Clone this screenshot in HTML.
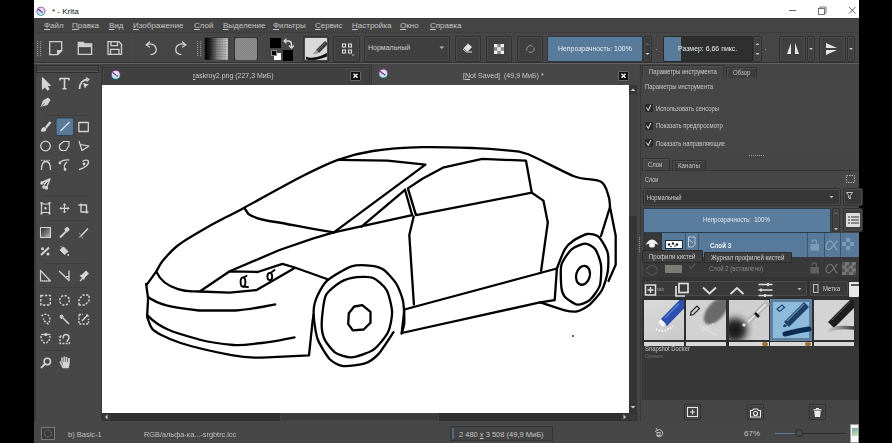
<!DOCTYPE html>
<html><head><meta charset="utf-8">
<style>
*{margin:0;padding:0;box-sizing:border-box}
html,body{width:892px;height:443px;overflow:hidden;background:#000;font-family:"Liberation Sans",sans-serif}
.a{position:absolute}
svg{position:absolute;overflow:visible}
.a{transform-origin:0 50%}
#app{position:absolute;left:34px;top:0;width:825px;height:443px;background:#464646;overflow:hidden}
#menu span{position:absolute;top:21px;white-space:nowrap;font-size:8px;color:#c4c4c4}
#menu u{text-decoration:underline}
.btn{position:absolute;background:#404040;border:1px solid #313131;border-radius:2px;box-shadow:inset 0 0 0 1px #4b4b4b}
.grip{position:absolute;width:4px;background-image:radial-gradient(circle,#8a8a8a 0.6px,transparent 0.9px);background-size:2px 2px}
</style></head><body>
<div id="app"></div>
<svg width="0" height="0" style="position:absolute"><defs>
<radialGradient id="kin" cx="0.6" cy="0.35" r="0.7"><stop offset="0" stop-color="#f6e4f2"/><stop offset="0.45" stop-color="#e3cde6"/><stop offset="0.7" stop-color="#c8e6ee"/><stop offset="1" stop-color="#b9e0ea"/></radialGradient>
<linearGradient id="kring" x1="0.3" y1="0" x2="0.5" y2="1"><stop offset="0" stop-color="#8a2c8c"/><stop offset="0.5" stop-color="#5a4a9a"/><stop offset="1" stop-color="#138a8a"/></linearGradient>
<g id="kicon"><circle r="4.9" fill="url(#kring)" opacity="0.9"/><circle r="4" fill="url(#kin)"/><path d="M-3.4 -2.4L0.6 0.6" stroke="#5a2f85" stroke-width="1.1"/><circle cx="1.3" cy="1.2" r="0.7" fill="#333"/></g>
</defs></svg>

<!-- title bar -->
<div class="a" style="left:34px;top:0;width:825px;height:18px;background:#fff"></div>
<svg style="left:0;top:0" width="60" height="20"><use href="#kicon" transform="translate(41 11.2) scale(0.92)"/></svg>
<div class="a" style="left:52px;top:7px;font-size:8px;color:#111">* - Krita</div>
<svg style="left:0;top:0" width="892" height="18">
  <line x1="789" y1="10.5" x2="796" y2="10.5" stroke="#555" stroke-width="0.9"/>
  <rect x="818.5" y="8.5" width="6" height="6" fill="none" stroke="#555" stroke-width="0.8"/>
  <path d="M820 8.5V7h6v6h-1.5" fill="none" stroke="#555" stroke-width="0.8"/>
  <path d="M849 7l6.5 6.5M855.5 7L849 13.5" stroke="#555" stroke-width="0.9"/>
</svg>
<!-- menu -->
<div class="a" style="left:34px;top:18px;width:825px;height:15px;background:#444444;border-top:1px solid #3a3a3a"></div>
<div id="menu">
  <span style="left:44px"><u>Ф</u>айл</span>
  <span style="left:72px"><u>П</u>равка</span>
  <span style="left:109px"><u>В</u>ид</span>
  <span style="left:133px"><u>И</u>зображение</span>
  <span style="left:194px"><u>С</u>лой</span>
  <span style="left:223px"><u>В</u>ыделение</span>
  <span style="left:273px"><u>Ф</u>ильтры</span>
  <span style="left:315px"><u>С</u>ервис</span>
  <span style="left:352px"><u>Н</u>астройка</span>
  <span style="left:400px"><u>О</u>кно</span>
  <span style="left:430px"><u>С</u>правка</span>
</div>
<!-- toolbar -->
<div class="a" style="left:34px;top:32px;width:825px;height:33px;background:#464646;border-top:1px solid #3d3d3d;border-bottom:1px solid #3c3c3c"></div><div class="a" style="left:34px;top:62px;width:825px;height:1px;background:#343434"></div><div class="a" style="left:34px;top:63px;width:825px;height:1px;background:#626262"></div>
<svg style="left:0;top:0" width="892" height="70" fill="#8c8c8c"><rect x="37" y="41" width="1.2" height="1.2"/><rect x="40" y="41" width="1.2" height="1.2"/><rect x="37" y="43" width="1.2" height="1.2"/><rect x="40" y="43" width="1.2" height="1.2"/><rect x="37" y="45" width="1.2" height="1.2"/><rect x="40" y="45" width="1.2" height="1.2"/><rect x="37" y="47" width="1.2" height="1.2"/><rect x="40" y="47" width="1.2" height="1.2"/><rect x="37" y="49" width="1.2" height="1.2"/><rect x="40" y="49" width="1.2" height="1.2"/><rect x="37" y="51" width="1.2" height="1.2"/><rect x="40" y="51" width="1.2" height="1.2"/><rect x="37" y="53" width="1.2" height="1.2"/><rect x="40" y="53" width="1.2" height="1.2"/><rect x="37" y="55" width="1.2" height="1.2"/><rect x="40" y="55" width="1.2" height="1.2"/></svg>
<svg style="left:0;top:0" width="892" height="70" fill="none" stroke="#cfcfcf" stroke-width="1.3">
  <!-- new -->
  <path d="M49.7 41.7h12v9l-4 4h-8z"/><path d="M61.7 50.7h-4v4" fill="#cfcfcf"/>
  <!-- open -->
  <path d="M78.3 54.3v-12h5l1 1.5h7.3v10.5z"/><path d="M78.3 46.5h13.3" /><path d="M78.3 42.3h5l1 1.5h7.3v2.7h-13.3z" fill="#cfcfcf" stroke="none"/>
  <!-- save -->
  <path d="M108 41.7h11l2.5 2.5v10.2h-13.5z"/><path d="M111 41.7v4h6.5v-4"/><path d="M110.5 54.4v-5h8.5v5"/>
  <!-- undo -->
  <path d="M147 45c2.5-1.8 8.5-1.5 9.2 4 .5 4-2.5 5.6-5.5 5.6"/><path d="M150 41.6L146.2 45l3.8 2.2"/>
  <!-- redo -->
  <path d="M185 45c-2.5-1.8-8.5-1.5-9.2 4-.5 4 2.5 5.6 5.5 5.6"/><path d="M182 41.6L185.8 45 182 47.2"/>
</svg>
<div class="a" style="left:132px;top:36px;width:1px;height:25px;background:#4a4a4a"></div>
<svg style="left:0;top:0" width="892" height="70" fill="#8c8c8c"><rect x="197" y="41" width="1.2" height="1.2"/><rect x="200" y="41" width="1.2" height="1.2"/><rect x="197" y="43" width="1.2" height="1.2"/><rect x="200" y="43" width="1.2" height="1.2"/><rect x="197" y="45" width="1.2" height="1.2"/><rect x="200" y="45" width="1.2" height="1.2"/><rect x="197" y="47" width="1.2" height="1.2"/><rect x="200" y="47" width="1.2" height="1.2"/><rect x="197" y="49" width="1.2" height="1.2"/><rect x="200" y="49" width="1.2" height="1.2"/><rect x="197" y="51" width="1.2" height="1.2"/><rect x="200" y="51" width="1.2" height="1.2"/><rect x="197" y="53" width="1.2" height="1.2"/><rect x="200" y="53" width="1.2" height="1.2"/><rect x="197" y="55" width="1.2" height="1.2"/><rect x="200" y="55" width="1.2" height="1.2"/></svg>
<!-- gradient -->
<div class="a" style="left:203px;top:36px;width:26px;height:25px;background:#333;border:1px solid #4a4a4a;border-radius:2px"></div>
<div class="a" style="left:205px;top:37.5px;width:22.5px;height:22.5px;background:repeating-conic-gradient(#d8d8d8 0 25%,#a8a8a8 0 50%) 0 0/2.5px 2.5px;border-radius:1px;overflow:hidden"><div class="a" style="left:0;top:0;width:100%;height:100%;background:linear-gradient(90deg,#000 0,rgba(0,0,0,.85) 20%,rgba(0,0,0,.35) 55%,rgba(0,0,0,0) 100%)"></div></div>
<!-- pattern -->
<div class="a" style="left:232.5px;top:36px;width:26.5px;height:25px;background:#333;border:1px solid #4a4a4a;border-radius:2px"></div>
<div class="a" style="left:235px;top:37.5px;width:22px;height:22.5px;background:repeating-conic-gradient(#8e8e8e 0 25%,#858585 0 50%) 0 0/2px 2px;border-radius:2px"></div>
<!-- colors -->
<div class="a" style="left:264px;top:35px;width:35px;height:27px;border:1px solid #474747;border-radius:2px"></div>
<div class="a" style="left:270px;top:37.5px;width:11px;height:10.5px;background:#000"></div>
<div class="a" style="left:282.5px;top:50px;width:10.5px;height:10.5px;background:#000"></div>
<div class="a" style="left:274px;top:53px;width:6.5px;height:7px;background:#fff"></div>
<div class="a" style="left:270.5px;top:49.8px;width:6px;height:6px;background:#000;border:1px solid #8a8a8a"></div>
<svg style="left:0;top:0" width="892" height="70" fill="none" stroke="#e0e0e0" stroke-width="1.3">
  <path d="M284.5 41h3.5c2.5 0 3.5 1.5 3.5 3.5v3"/><path d="M286.5 38.6L284 41l2.5 2.4M289 45.5l2.5 2.6 2.5-2.6" stroke-width="1.2"/>
</svg>
<!-- brush preset -->
<div class="btn" style="left:303px;top:36px;width:26px;height:26px"></div>
<div class="a" style="left:305px;top:38px;width:22px;height:22px;background:#d9d9d9;border-radius:1px;overflow:hidden">
  <svg style="left:0;top:0" width="22" height="22">
    <path d="M11 12l9-9 3 3-9 9z" fill="#3a3a3a"/><path d="M11 12l-3.5 4.5 6.5-1.5z" fill="#9a9a9a"/><path d="M12 13l8-8" stroke="#777" stroke-width="0.8"/>
    <path d="M1 18.5c5 2.5 13 1 22-4v3.5c-8 4-16 5-22 3.5z" fill="#111"/>
  </svg>
</div>
<!-- workspace -->
<div class="btn" style="left:333px;top:36px;width:27px;height:26px"></div>
<svg style="left:0;top:0" width="892" height="70" fill="none" stroke="#dadada" stroke-width="1.1">
  <rect x="342.5" y="44" width="3" height="3"/><rect x="348.5" y="44" width="3" height="3"/>
  <rect x="342.5" y="50" width="3" height="3"/><rect x="348.5" y="50" width="3" height="3"/>
  <path d="M352 54.5l1.2 1 1.2-1" stroke-width="0.8"/>
</svg>
<!-- blend combo -->
<div class="btn" style="left:364px;top:36px;width:86px;height:26px"></div>
<div class="a" style="left:368px;top:44px;font-size:7px;color:#cfcfcf">Нормальный</div>
<svg style="left:0;top:0" width="892" height="70"><path d="M439.5 46.5h4.5l-2.25 2.5z" fill="#bdbdbd"/></svg>
<!-- eraser -->
<div class="btn" style="left:455px;top:36px;width:26px;height:26px"></div>
<svg style="left:0;top:0" width="892" height="70">
  <path d="M468 43.5l4 3.5-4.5 4.8-4-3.5z" fill="#e0e0e0"/><path d="M463 49l3.5 3h5.5" stroke="#e0e0e0" stroke-width="1" fill="none"/>
</svg>
<!-- alpha -->
<div class="btn" style="left:486px;top:36px;width:26px;height:26px"></div>
<svg style="left:0;top:0" width="892" height="70"><g style="filter:blur(0.5px)"><rect x="494" y="44" width="10" height="10" fill="#8a8a8a"/><path d="M494 44h3.3v3.3h-3.3zM500.7 44h3.3v3.3h-3.3zM497.3 47.3h3.4v3.4h-3.4zM494 50.7h3.3v3.3h-3.3zM500.7 50.7h3.3v3.3h-3.3z" fill="#f0f0f0"/></g></svg>
<!-- reload -->
<div class="btn" style="left:517px;top:36px;width:26px;height:26px"></div>
<svg style="left:0;top:0" width="892" height="70" fill="none" stroke="#9a9a9a" stroke-width="1">
  <path d="M527 50.5a3.6 3.6 0 0 1 5.5-4.2"/><path d="M534 47.5a3.6 3.6 0 0 1-5.5 4.2"/>
</svg>
<!-- opacity slider -->
<div class="a" style="left:547px;top:36px;width:96px;height:26px;background:#587a9b;border:1px solid #2d3a46;border-radius:2px"></div>
<div class="a" style="left:558px;top:44px;font-size:7.5px;color:#e8eef3;transform:scaleX(0.92)">Непрозрачность: 100%</div>
<div class="btn" style="left:643px;top:36px;width:9px;height:26px;background:#3a3a3a"></div>
<svg style="left:0;top:0" width="892" height="70"><path d="M645.5 45l2 -2 2 2z" fill="#6a6a6a"/><path d="M645.5 53l2 2 2-2z" fill="#d0d0d0"/></svg>
<div class="a" style="left:656px;top:49px;width:1px;height:1px;background:#999"></div>
<!-- size slider -->
<div class="a" style="left:663px;top:36px;width:90px;height:26px;background:#2f2f2f;border:1px solid #2a2a2a;border-radius:2px;overflow:hidden"><div class="a" style="left:0;top:0;width:17px;height:24px;background:#587a9b"></div></div>
<div class="a" style="left:678px;top:44px;font-size:7.5px;color:#e8eef3;transform:scaleX(0.925)">Размер: 6,66 пикс.</div>
<div class="btn" style="left:753px;top:36px;width:9px;height:26px"></div>
<svg style="left:0;top:0" width="892" height="70"><path d="M755.5 45l2 -2 2 2z" fill="#c0c0c0"/><path d="M755.5 53l2 2 2-2z" fill="#d0d0d0"/></svg>
<div class="a" style="left:765px;top:49px;width:1px;height:1px;background:#999"></div>
<!-- mirror -->
<div class="btn" style="left:779px;top:36px;width:27px;height:26px"></div>
<svg style="left:0;top:0" width="892" height="70"><path d="M787 54l4-11v11z M799 54l-4-11v11z" fill="#e6e6e6"/></svg>
<div class="btn" style="left:807px;top:36px;width:8px;height:26px"></div>
<svg style="left:0;top:0" width="892" height="70"><path d="M809 48h4l-2 2z" fill="#c8c8c8"/></svg>
<div class="btn" style="left:819px;top:36px;width:27px;height:26px"></div>
<svg style="left:0;top:0" width="892" height="70"><path d="M826 43l11 5h-11z M826 55l11-5h-11z" fill="#e6e6e6"/></svg>
<div class="btn" style="left:847px;top:36px;width:8px;height:26px"></div>
<svg style="left:0;top:0" width="892" height="70"><path d="M849 48h4l-2 2z" fill="#c8c8c8"/></svg>
<!-- ===== toolbox ===== -->
<div class="a" style="left:34px;top:64px;width:68px;height:359px;background:#474747;border-left:2px solid #3a3a3a;border-right:1px solid #3a3a3a"></div>
<div class="a" style="left:36px;top:65px;width:63px;height:8px;background:#404040;border:1px solid #2e2e2e;box-shadow:inset 0 -1px 0 #555, inset 0 1px 0 #4c4c4c"></div>
<svg style="left:0;top:0" width="892" height="443" fill="none" stroke="#d4d4d4" stroke-width="1.2" stroke-linejoin="round">
  <!-- separators -->
  <g stroke="#3e3e3e" stroke-width="1">
    <path d="M42 115.5h46M42 196h46M42 220.5h46M42 263.5h46M42 287.5h46M42 350.5h28"/>
  </g>
  <!-- select arrow -->
  <path d="M42.5 78v11l2.5-2.5 2.5 3.5 1.5-1-2.3-3.5h3.5z" fill="#d4d4d4"/>
  <!-- T -->
  <path d="M60 80.5v-2h9v2M64.5 78.5v10M62.5 88.8h4" stroke-width="1.6"/>
  <!-- transform path -->
  <path d="M79.5 89c0-6 3.5-9.5 8-9.5" stroke-width="1.8"/><path d="M86 77.5l3 2-2.5 2" stroke-width="1.2"/><path d="M83 83l6 1.5-2.5 1.5-1.5 2.5z" fill="#d4d4d4" stroke="none"/>
  <!-- pen nib -->
  <path d="M40.5 107l2.5-6.5 5-3 2.5 2.5-3 5z" fill="#d4d4d4" stroke="none"/><path d="M41 106.8l3.5-3.5" stroke="#454545" stroke-width="0.8"/>
  <!-- brush -->
  <path d="M41 131.5c0-3 1.5-4.5 4-4.5l1.5 1.5c0 2.5-2 4-5.5 3z" fill="#d4d4d4" stroke="none"/><path d="M46 127.5l4.5-5.5" stroke-width="2.4"/>
  <!-- line tool selected -->
  <rect x="56" y="118" width="17.5" height="17.5" rx="2" fill="#5b7a98" stroke="#2d4254" stroke-width="1"/>
  <path d="M60.5 131l9-9" stroke="#dfe6ec" stroke-width="1.1"/>
  <!-- rect -->
  <rect x="78.8" y="122.5" width="9.5" height="9" stroke-width="1.3"/>
  <!-- circle -->
  <circle cx="45.5" cy="146" r="4.8" stroke-width="1.3"/>
  <!-- polygon -->
  <path d="M59.5 148.5v-3.5l4-3.5h5.5v4l-3 5h-4.5z" stroke-width="1.2"/>
  <!-- polyline -->
  <path d="M79 141l3 9.5 7-4.5-8.5-1.5" stroke-width="1.2"/>
  <!-- bezier -->
  <path d="M41.5 170c0-5.5 2-8.5 4.5-8.5s4.5 3 4.5 8.5" stroke-width="1.3"/><path d="M41 160.3h10" stroke-width="1" stroke-dasharray="1.5 1"/>
  <!-- freehand path -->
  <path d="M59.5 163c2-2.5 5-3.5 10-3M65 169.5c-1.5-3 0-6 2-7.5" stroke-width="1.2"/><circle cx="60" cy="163" r="0.8" fill="#d4d4d4"/><circle cx="65" cy="169.5" r="0.8" fill="#d4d4d4"/>
  <!-- spline -->
  <path d="M79 169.5c5-1 10-5 9.5-8-.5-2-4-1.5-6 0" stroke-width="1.3"/><circle cx="84" cy="164" r="0.8" fill="#d4d4d4"/>
  <!-- multibrush -->
  <path d="M41.5 182.5l8.5-3.5-3.5 8.5M44 184.5l5.5-5.5" stroke-width="1.4"/><circle cx="42" cy="183" r="1.2" fill="#d4d4d4"/><circle cx="44" cy="187" r="1.2" fill="#d4d4d4"/><circle cx="46.5" cy="188" r="1.1" fill="#d4d4d4"/>
  <!-- transform -->
  <rect x="41.5" y="204" width="8" height="8.5" stroke-width="1.2"/><path d="M40.5 203h2M48.5 203h2M40.5 213.5h2M48.5 213.5h2" stroke-width="1.8"/><circle cx="45.5" cy="208.2" r="0.6" fill="#d4d4d4"/>
  <!-- move -->
  <path d="M60 208.3h9M64.5 203.8v9" stroke-width="1.2"/><path d="M61.5 206.8l-1.5 1.5 1.5 1.5M67.5 206.8l1.5 1.5-1.5 1.5M63 205.3l1.5-1.5 1.5 1.5M63 211.3l1.5 1.5 1.5-1.5" stroke-width="1"/>
  <!-- crop -->
  <path d="M78.5 205h2.5v7h7.5M81 205h5.5v7M81 203.5v1.5M86.5 212v1.5" stroke-width="1.4"/>
  <!-- gradient -->
  <rect x="40.5" y="227.5" width="10" height="10" fill="url(#gtool)" stroke-width="1.1"/>
  <!-- color picker -->
  <path d="M60 237.5l6-6" stroke-width="1.8"/><path d="M65 229.5l2-2 2 2-2 2z" fill="#d4d4d4"/>
  <!-- smart patch -->
  <path d="M80.5 236.5l7.5-8" stroke-width="1.6"/><path d="M79 233l1.5 1M83 238.5l-1-1.5M78.5 237h2" stroke-width="0.8" stroke="#bcbcbc"/>
  <!-- pattern/% -->
  <path d="M41 255l8-7.5" stroke-width="2"/><circle cx="42.5" cy="248.8" r="1.5" fill="#d4d4d4" stroke="none"/><circle cx="48" cy="254" r="1.5" fill="#d4d4d4" stroke="none"/>
  <!-- fill bucket -->
  <path d="M60 250l3.5-3 4.5 4.5-3.5 3z" fill="#d4d4d4" stroke-width="1"/><path d="M62 247.5l-1.5-1.5" stroke-width="1"/><circle cx="68.3" cy="255" r="0.9" fill="#d4d4d4" stroke="none"/>
  <!-- measure -->
  <path d="M40.5 270.5v10.5h10z" stroke-width="1.2"/><path d="M42 281h8" stroke-dasharray="1 1" stroke-width="1"/>
  <!-- assistant -->
  <path d="M59 271l10 9.5v-10" stroke-width="1.3"/><path d="M66 276.5h3" stroke-width="1"/>
  <!-- pin -->
  <path d="M80 281l3-3" stroke-width="1.2"/><path d="M82 274.5l4-4 3 3-4 4-1 2.5-4.5-4.5z" fill="#d4d4d4" stroke="none"/>
  <!-- rect select -->
  <rect x="40.8" y="295.5" width="9.5" height="9.5" stroke-width="1.4" stroke-dasharray="2.5 1.5"/>
  <!-- ellipse select -->
  <circle cx="64.5" cy="300.3" r="4.8" stroke-width="1.4" stroke-dasharray="2.2 1.5"/>
  <!-- polygon select -->
  <path d="M79 305v-6l4-4h6v6l-4 4z" stroke-width="1.4" stroke-dasharray="2.2 1.5"/>
  <!-- freehand select -->
  <path d="M41.5 316c2-2 6-2.5 7.5 0s1 5-1 8c-2-2-5-3-4.5-5.5" stroke-width="1.4" stroke-dasharray="2 1.3"/>
  <!-- magic wand -->
  <path d="M63 318l6 6" stroke-width="1.6"/><path d="M61.5 314.5v4.5M59.5 316.8h4.5M60 315l3 3.5M63 315l-3 3.5" stroke-width="1"/>
  <!-- similar select -->
  <path d="M79 314.5v9.5h9.5v-5M79 314.5h4" stroke-width="1.4" stroke-dasharray="2 1.3"/><path d="M82 321l5.5-6" stroke-width="1.4"/><path d="M86.5 314.5l2 2" stroke-width="1.4"/>
  <!-- bezier select -->
  <path d="M41 336c0 4 2 7 4.5 7s4.5-3 4.5-7" stroke-width="1.4" stroke-dasharray="2 1.3"/><path d="M41 334.5h9.5" stroke-width="1.2"/><circle cx="45.8" cy="334.5" r="1" fill="#d4d4d4"/>
  <!-- magnetic select -->
  <path d="M60 336v7.5h9.5v-2M60 336h1.5" stroke-width="1.4" stroke-dasharray="2 1.3"/><path d="M63 338.5c0-3 1.5-4 3-4s3 1 3 3-2 3-2 4.5" stroke-width="1.4"/>
  <!-- zoom -->
  <circle cx="47.3" cy="361.5" r="3.2" stroke-width="1.5"/><path d="M45 364l-4 3.8" stroke-width="1.8"/>
  <!-- pan hand -->
  <path d="M60 361.5l3 6h5l1-4v-5.5M62 362v-4.5M64.2 362v-5.5M66.4 362v-5M68.6 362.5v-4" stroke-width="1.5"/>
  <path d="M62 362h6.5v5h-5z" fill="#d4d4d4" stroke="none"/>
</svg>
<svg width="0" height="0" style="position:absolute"><defs><linearGradient id="gtool" x1="0" y1="0" x2="1" y2="1"><stop offset="0" stop-color="#222"/><stop offset="1" stop-color="#bbb"/></linearGradient></defs></svg>
<!-- ===== canvas area ===== -->
<div class="a" style="left:102px;top:64px;width:536px;height:21px;background:#444444;border-top:1px solid #3a3a3a"></div>
<!-- tab 1 -->
<div class="a" style="left:102px;top:67px;width:268px;height:18px;background:#404040;border:1px solid #353535;border-bottom:none;box-shadow:inset 1px 1px 0 #4a4a4a"></div>
<svg style="left:0;top:0" width="892" height="100"><use href="#kicon" transform="translate(115.8 74.8)"/></svg>
<div class="a" style="left:193px;top:71px;font-size:7.5px;color:#c9c9c9;transform:scaleX(0.93)"><u>r</u>askroy2.png (227,3 МиБ)</div>
<div class="a" style="left:350px;top:71px;width:11px;height:10px;background:#111;border:1px solid #666;border-radius:1px"></div>
<svg style="left:0;top:0" width="892" height="100"><path d="M353.5 73.8l4 4M357.5 73.8l-4 4" stroke="#eee" stroke-width="1.5"/></svg>
<!-- tab 2 -->
<div class="a" style="left:371px;top:64px;width:267px;height:21px;background:#474747;border-left:1px solid #353535;border-right:1px solid #353535"></div>
<svg style="left:0;top:0" width="892" height="100"><use href="#kicon" transform="translate(383.3 73.6)"/></svg>
<div class="a" style="left:463px;top:71px;font-size:7.5px;color:#c9c9c9;transform:scaleX(0.945)">[<u>N</u>ot Saved]&nbsp; (49,9 МиБ) *</div>
<div class="a" style="left:618px;top:71px;width:11px;height:10px;background:#111;border:1px solid #666;border-radius:1px"></div>
<svg style="left:0;top:0" width="892" height="100"><path d="M621.5 73.8l4 4M625.5 73.8l-4 4" stroke="#eee" stroke-width="1.5"/></svg>
<!-- white canvas -->
<div class="a" style="left:102px;top:85px;width:527px;height:328px;background:#fff"></div>
<!-- v scrollbar -->
<div class="a" style="left:629px;top:85px;width:8px;height:336px;background:#353535"></div>
<div class="a" style="left:629px;top:94px;width:8px;height:122px;background:#414141"></div>
<svg style="left:0;top:0" width="892" height="443"><path d="M630.5 91l2.5-2.5 2.5 2.5z" fill="#c8c8c8"/><path d="M630.5 406l2.5 2.5 2.5-2.5z" fill="#c8c8c8"/></svg>
<!-- h scrollbar -->
<div class="a" style="left:102px;top:413px;width:527px;height:8px;background:#2f2f2f"></div>
<div class="a" style="left:102px;top:413px;width:9px;height:8px;background:#383838;border:1px solid #333"></div><div class="a" style="left:280px;top:413px;width:159px;height:8px;background:#3b3b3b;border:1px solid #454545;border-radius:1px"></div>
<div class="a" style="left:621px;top:413px;width:16px;height:8px;background:#3a3a3a;border:1px solid #333"></div>
<svg style="left:0;top:0" width="892" height="443"><path d="M107.5 414.5l-2.5 2.5 2.5 2.5z" fill="#c8c8c8"/><path d="M623.5 414.5l2.5 2.5-2.5 2.5z" fill="#c8c8c8"/></svg>
<!-- ===== car drawing ===== -->
<svg style="left:0;top:0" width="892" height="443" fill="none" stroke="#000" stroke-width="2.3" stroke-linejoin="round" stroke-linecap="round">
  <!-- roof/hood outline -->
  <path d="M146.8 284.6C148.2 282.7 153.4 275.7 155.8 272.2C158.2 268.7 159.2 265.1 162.6 261.0C166.0 256.9 171.6 250.1 178.4 245.0C185.2 239.9 197.9 232.6 207.7 227.0C217.5 221.4 229.6 215.6 243.8 207.9C258.0 200.2 288.5 183.2 302.6 176.0C316.7 168.8 327.4 163.6 337.9 159.8C348.4 156.1 360.2 152.9 372.9 151.0C385.6 149.1 407.1 147.6 422.4 147.2C437.7 146.8 462.8 147.7 475.0 148.1C487.2 148.5 496.1 149.3 504.0 150.2C511.9 151.1 516.9 150.1 527.4 154.0C537.9 157.9 563.0 172.0 574.0 176.2C585.0 180.4 595.8 178.7 601.0 181.7C606.2 184.7 607.1 192.2 608.5 196.0C609.9 199.8 609.8 205.3 610.0 207.0L615.7 235.8L615.7 264.7L608.5 281"/>
  <!-- windshield cowl -->
  <path d="M244.3 208L248.4 214C254 218 262 220 275.5 222S310 229 333.8 232.4"/>
  <!-- windshield top and A-pillar -->
  <path d="M337.9 159.8L387.5 160.7L425.4 164.7L333.5 232.7"/>
  <path d="M405 189.8L361.2 226.8"/>
  <!-- hood crease / quarter window bottom -->
  <path d="M229.7 271.3L279.5 250L313.4 238.4L333.8 232.4L412.2 215.2"/>
  <path d="M405 189.8L412.2 215.2"/>
  <!-- side window -->
  <path d="M407.9 188.4L422.4 178.7L442.9 167.7L482.2 158.9L526 160.7L531.8 192.7L416 215.2L407.9 188.4"/>
  <!-- C pillar -->
  <path d="M531.8 192.7L543.4 200.6L547.8 222.5L541.1 270.8"/>
  <!-- door front -->
  <path d="M413.7 216.6L409.3 235L413.9 304.5"/>
  <!-- rocker -->
  <path d="M404.4 309.5L556.9 268.5L554.7 300.1L540 302.4L401.7 333L404.4 309.5"/>
  <!-- headlight -->
  <path d="M156.8 272.4C160 280 168 286 178 289.2S190 291 199.4 291.5L229.7 292.6L256.6 290L294.7 268"/>
  <path d="M200.5 291L229.7 271.3L257.7 272L282.4 263.9L294.7 267.5L328.3 279.5"/>
  <ellipse cx="243" cy="282" rx="2.4" ry="4.6" stroke-width="1.9"/><path d="M243.5 277.5L246.5 275.8M243 286.6L248 287" stroke-width="1.9"/>
  <ellipse cx="269.8" cy="276.5" rx="2.4" ry="3.6" stroke-width="1.9"/><path d="M270.5 273L274.5 270" stroke-width="1.9"/>
  <!-- front face + bottom -->
  <path d="M146.1 284L148.1 298.3L147.1 316.6C149 322 150 326 152.2 328.8S165 338 180.6 343S215 352 231.5 355.2S250 357.5 262 357.6L309 355.3L312.5 322L313.6 314.6"/>
  <!-- bumper lines -->
  <path d="M148 297C152 300 158 303 166.4 305.4S185 309 199 310.5L235.5 310.5C250 309.5 262 307 275.2 304.4"/>
  <path d="M147.7 315.6C152 320 160 326 168.5 329.8S190 337 201 340S222 344 233.5 345S250 344 262 343S285 339 294.5 337.3"/>
  <!-- front tire outer -->
  <path d="M393.5 332.2C391.8 334.7 381.9 350.3 378.6 353.9C375.3 357.5 369.1 362.0 365.0 363.4C360.9 364.8 347.5 366.6 343.4 366.1C339.3 365.6 332.8 362.5 329.8 359.3C326.8 356.1 319.5 344.2 317.6 339.0C315.7 333.8 313.8 319.3 313.6 314.6C313.4 309.9 314.7 302.4 316.3 298.4C317.9 294.4 323.0 284.4 327.1 280.7C331.2 277.0 346.3 268.1 351.5 266.4C356.7 264.7 368.0 265.4 371.8 265.8C375.6 266.2 381.2 267.9 384.0 270.0C386.8 272.1 394.0 279.9 396.2 283.5C398.4 287.1 402.1 296.4 403.0 301.0C403.9 305.6 404.5 318.9 404.3 322.7C404.1 326.5 401.9 332.3 401.6 333.6"/>
  <!-- front tire inner -->
  <path d="M321.7 322.8C321.9 317.7 323.5 300.4 325.7 295.7C327.9 291.0 337.1 284.3 340.7 282.1C344.3 279.9 353.1 277.7 356.9 277.2C360.7 276.7 369.7 276.5 373.2 278.0C376.7 279.5 384.5 286.2 386.7 290.2C388.9 294.2 391.9 307.0 392.1 311.9C392.3 316.8 390.2 327.8 388.0 332.2C385.8 336.6 377.5 347.0 373.2 349.9C368.9 352.8 355.9 357.1 351.5 357.4C347.1 357.7 338.4 354.7 335.2 352.6C332.0 350.5 326.0 342.5 324.4 339.0C322.8 335.5 321.5 327.9 321.7 322.8Z"/>
  <!-- front hub -->
  <path d="M348.8 313.3L354.2 306.5L362.3 305.1L370.5 311.9L370.5 322.7L363.7 329.5L352.8 330.3L348.2 324.1Z"/>
  <!-- rear tire outer -->
  <path d="M556.9 268.5C557.8 266.3 562.8 252.6 564.8 249.3C566.8 246.0 571.3 242.1 573.9 240.3C576.5 238.5 584.5 234.4 587.4 234.0C590.3 233.6 596.3 234.7 598.7 236.9C601.1 239.1 606.7 248.6 607.7 252.7C608.8 256.8 608.4 267.5 607.7 271.9C607.0 276.3 604.1 286.2 602.0 290.0C599.9 293.8 592.6 302.1 589.7 304.6C586.8 307.1 580.1 310.7 577.2 311.4C574.3 312.1 569.1 311.4 564.8 310.3C560.5 309.2 542.9 303.3 540.0 302.4"/>
  <!-- rear tire inner -->
  <path d="M561.4 287.7C561.0 284.0 560.2 269.5 561.4 265.0C562.6 260.5 568.8 251.8 571.6 249.3C574.4 246.8 582.3 243.7 585.1 243.7C587.9 243.7 593.4 246.8 595.3 249.3C597.2 251.8 600.5 260.8 601.0 265.0C601.5 269.2 601.1 281.4 599.8 285.5C598.5 289.6 592.3 297.9 589.7 300.1C587.1 302.3 580.1 305.0 577.2 304.6C574.3 304.2 566.6 298.7 564.8 296.7C563.0 294.7 561.8 291.4 561.4 287.7Z"/>
  <!-- rear hub -->
  <ellipse cx="583" cy="275.3" rx="6.8" ry="9.6" transform="rotate(15 583 275.3)"/>
  <!-- rear body -->
  <path d="M610 207L601 235.8"/>
</svg>
<div class="a" style="left:572px;top:335px;width:2px;height:2px;background:#666"></div>
<!-- ===== docker ===== -->
<div class="a" style="left:637px;top:64px;width:222px;height:357px;background:#454545"></div>
<div class="a" style="left:640px;top:64px;width:1px;height:357px;background:#383838"></div>
<!-- tool options tabs -->
<div class="a" style="left:642px;top:65px;width:82px;height:14px;background:#454545;border:1px solid #333;border-bottom:none;box-shadow:inset 1px 1px 0 #505050"></div>
<div class="a" style="left:649px;top:68px;font-size:7px;color:#cdcdcd;white-space:nowrap;transform:scaleX(0.84)">Параметры инструмента</div>
<div class="a" style="left:726px;top:67px;width:31px;height:12px;background:#3e3e3e;border:1px solid #333;border-bottom:none;box-shadow:inset 1px 1px 0 #4e4e4e"></div>
<div class="a" style="left:733px;top:69px;font-size:7px;color:#c4c4c4;transform:scaleX(0.86)">Обзор</div>
<!-- tool options panel -->
<div class="a" style="left:642px;top:78px;width:217px;height:78px;background:#464646"></div>
<div class="a" style="left:645px;top:83px;font-size:6.5px;color:#c8c8c8;white-space:nowrap;transform:scaleX(0.91)">Параметры инструмента</div>
<div class="a" style="left:645px;top:104px;width:8px;height:8px;background:#2b2b2b;border-radius:1px"></div>
<div class="a" style="left:645px;top:122px;width:8px;height:8px;background:#2b2b2b;border-radius:1px"></div>
<div class="a" style="left:645px;top:139px;width:8px;height:8px;background:#2b2b2b;border-radius:1px"></div>
<svg style="left:0;top:0" width="892" height="443" fill="none" stroke="#e6e6e6" stroke-width="1">
  <path d="M646.5 107.5l1.8 3 2.5-5.5M646.5 125.5l1.8 3 2.5-5.5M646.5 142.5l1.8 3 2.5-5.5"/>
</svg>
<div class="a" style="left:656px;top:104.5px;font-size:6.5px;color:#c8c8c8;white-space:nowrap;transform:scaleX(0.91)">Использовать сенсоры</div>
<div class="a" style="left:656px;top:122px;font-size:6.5px;color:#c8c8c8;white-space:nowrap;transform:scaleX(0.925)">Показать предпросмотр</div>
<div class="a" style="left:656px;top:139.5px;font-size:6.5px;color:#c8c8c8;white-space:nowrap;transform:scaleX(0.915)">Показать направляющие</div>
<div class="a" style="left:749px;top:155px;width:15px;height:1px;background-image:linear-gradient(90deg,#9a9a9a 50%,transparent 50%);background-size:2px 1px"></div>
<!-- layers tabs -->
<div class="a" style="left:642px;top:158px;width:28px;height:13px;background:#454545;border:1px solid #333;border-bottom:none;box-shadow:inset 1px 1px 0 #505050"></div>
<div class="a" style="left:648px;top:161px;font-size:7px;color:#cdcdcd;transform:scaleX(0.84)">Слои</div>
<div class="a" style="left:672px;top:160px;width:34px;height:11px;background:#3e3e3e;border:1px solid #333;border-bottom:none;box-shadow:inset 1px 1px 0 #4e4e4e"></div>
<div class="a" style="left:678px;top:162px;font-size:7px;color:#c4c4c4;transform:scaleX(0.88)">Каналы</div>
<!-- layers panel -->
<div class="a" style="left:642px;top:170px;width:217px;height:107px;background:#464646;border-top:1px solid #353535"></div>
<div class="a" style="left:645px;top:176px;font-size:7px;color:#c8c8c8;transform:scaleX(0.78)">Слои</div>
<svg style="left:0;top:0" width="892" height="443" fill="none" stroke="#bdbdbd" stroke-width="0.9">
  <rect x="846.5" y="175.5" width="8" height="7" stroke-dasharray="1.5 1"/>
</svg>
<div class="btn" style="left:643px;top:188px;width:198px;height:18px;background:#373737"></div>
<div class="a" style="left:647px;top:193.5px;font-size:7px;color:#cfcfcf;transform:scaleX(0.82)">Нормальный</div>
<svg style="left:0;top:0" width="892" height="443"><path d="M829.5 196h4l-2 2.2z" fill="#bdbdbd"/></svg>
<div class="btn" style="left:843px;top:188px;width:20px;height:18px;background:#373737"></div>
<svg style="left:0;top:0" width="892" height="443" fill="none" stroke="#cfcfcf" stroke-width="0.9"><path d="M846.5 192.5h6l-2.2 3v3.5l-1.6-1v-2.5z"/></svg>
<div class="a" style="left:643px;top:207.5px;width:188px;height:25px;background:#5a7c9d;border:1px solid #2e3d4b;border-radius:1px"></div>
<div class="a" style="left:703px;top:216px;font-size:7px;color:#e2e9ef;white-space:nowrap;transform:scaleX(0.87)">Непрозрачность:&nbsp; 100%</div>
<div class="btn" style="left:832px;top:208px;width:8px;height:24px"></div>
<svg style="left:0;top:0" width="892" height="443"><path d="M834 228h4l-2 2.2z" fill="#bdbdbd"/><path d="M834 214l2-2 2 2z" fill="#666"/></svg>
<div class="btn" style="left:843px;top:208px;width:20px;height:24px"></div>
<div class="a" style="left:846px;top:213px;width:14px;height:14px;background:#ddd;border-radius:1px"></div>
<svg style="left:0;top:0" width="892" height="443" stroke="#333" stroke-width="1"><path d="M848 217h2M851 217h8M848 220h2M851 220h8M848 223h2M851 223h8"/></svg>
<!-- layer row 1 -->
<div class="a" style="left:643px;top:233px;width:216px;height:24px;background:#587a9a"></div>
<div class="a" style="left:643px;top:233px;width:19px;height:24px;background:#383838"></div>
<div class="a" style="left:685px;top:233px;width:1px;height:24px;background:#3e5770"></div>
<div class="a" style="left:698px;top:233px;width:1px;height:24px;background:#3e5770"></div>
<div class="a" style="left:807px;top:233px;width:1px;height:24px;background:#3e5770"></div>
<div class="a" style="left:824px;top:233px;width:1px;height:24px;background:#3e5770"></div>
<div class="a" style="left:840px;top:233px;width:1px;height:24px;background:#3e5770"></div>
<svg style="left:0;top:0" width="892" height="443">
  <path d="M645.5 245c2-4 4.5-5.5 6.5-5.5s4.5 1.5 6.5 5.5c-1.5-1-3.5-1.5-6.5-1.5s-5 .5-6.5 1.5z" fill="#f2f2f2"/>
  <ellipse cx="652" cy="245" rx="3" ry="2.6" fill="#f2f2f2"/>
</svg>
<div class="a" style="left:664.5px;top:240px;width:18px;height:9px;background:#fff;border:1px solid #1d2a36"></div>
<svg style="left:0;top:0" width="892" height="443" fill="#222"><circle cx="669" cy="244.5" r="1.2"/><circle cx="673" cy="243.5" r="1.2"/><circle cx="677" cy="244.5" r="1.2"/><circle cx="671" cy="246.5" r="0.8"/><circle cx="675" cy="246" r="0.8"/></svg>
<svg style="left:0;top:0" width="892" height="443" fill="none" stroke="#c6d3df" stroke-width="0.9"><path d="M688.5 237h6.5v7.5l-2.5 2.5h-4zM689 239.5l4 3.5"/></svg>
<div class="a" style="left:710px;top:241.5px;font-size:7px;color:#eef2f5;font-weight:bold;transform:scaleX(0.89)">Слой 3</div>
<svg style="left:0;top:0" width="892" height="443" fill="#7e9cb6">
  <path d="M810.5 244h8.5v6.5h-8.5z"/><path d="M816.5 244v-1.5c0-1.8-1-2.6-2.2-2.6s-2.2.8-2.2 2.6" fill="none" stroke="#7e9cb6" stroke-width="1.2"/>
  <path d="M837.5 240.8 C834 243.8 832 248.8 829 249.6 C826 250.1 825.5 246.8 826.5 244.3 C828 240.3 831.5 240.3 833 243.3 C834.5 246.3 835.5 249.3 837.5 250.0" fill="none" stroke="#89a5be" stroke-width="1.2"/>
  <path d="M846 238h4v4h-4zM850 242h4v4h-4zM846 246h4v4h-4zM842 242h4v4h-4z"/>
</svg>
<!-- layer row 2 -->
<div class="a" style="left:643px;top:257px;width:216px;height:20px;background:#393939"></div>
<svg style="left:0;top:0" width="892" height="443" fill="none" stroke="#595959" stroke-width="1.2">
  <path d="M646 270c2-3.5 4-4.5 6-4.5s4 1 6 4.5M646.5 271.5c2 2.5 3.5 3.5 5.5 3.5s3.5-1 5.5-3.5"/>
  <path d="M689 266l2 2.5 4-5" stroke="#5a5a5a"/>
</svg>
<div class="a" style="left:665px;top:265px;width:17px;height:8px;background:#7a7e72"></div>
<div class="a" style="left:709px;top:265px;font-size:7px;color:#8a8a8a;white-space:nowrap;transform:scaleX(0.86)">Слой 2 (вставлено)</div>
<svg style="left:0;top:0" width="892" height="443" fill="#606060">
  <path d="M810.5 267h8.5v6.5h-8.5z"/><path d="M816.5 267v-1.5c0-1.8-1-2.6-2.2-2.6s-2.2.8-2.2 2.6" fill="none" stroke="#606060" stroke-width="1.2"/>
  <path d="M837.5 264.0 C834 267.0 832 272.0 829 272.8 C826 273.3 825.5 270.0 826.5 267.5 C828 263.5 831.5 263.5 833 266.5 C834.5 269.5 835.5 272.5 837.5 273.2" fill="none" stroke="#6e6e6e" stroke-width="1.2"/>
</svg>
<div class="a" style="left:842px;top:262px;width:14px;height:13px;background:conic-gradient(#777 25%,#555 0 50%,#777 0 75%,#555 0);background-size:7px 6.5px"></div>
<!-- tooltips -->
<div class="a" style="left:642px;top:250px;width:61px;height:13px;background:#3e3e3e;border:1px solid #2c2c2c;border-radius:1px"></div>
<div class="a" style="left:649px;top:253px;font-size:6.5px;color:#d0d0d0;white-space:nowrap;transform:scaleX(0.93)">Профили кистей</div>
<div class="a" style="left:704px;top:252px;width:88px;height:11px;background:#3e3e3e;border:1px solid #2c2c2c;border-radius:1px"></div>
<div class="a" style="left:711px;top:254px;font-size:6.5px;color:#d0d0d0;white-space:nowrap;transform:scaleX(0.94)">Журнал профилей кистей</div>
<!-- layer button bar -->
<div class="a" style="left:642px;top:277px;width:217px;height:21px;background:#343434"></div>
<div class="btn" style="left:643px;top:280px;width:165px;height:17px;background:#3a3a3a"></div>
<svg style="left:0;top:0" width="892" height="443" fill="none" stroke="#dedede" stroke-width="1.2">
  <rect x="645.5" y="285" width="10" height="10" stroke-width="1.5"/><path d="M650.5 287v6M647.5 290h6" stroke-width="1.5"/>
  <rect x="679" y="283.5" width="9" height="9" stroke-width="1.7"/><path d="M676 286v10h9" stroke-width="1.7"/>
  <path d="M703 287.5l6.5 6 6.5-6" stroke-width="1.8"/>
  <path d="M730.5 294l6.5-6 6.5 6" stroke-width="1.8"/>
  <path d="M758.5 284.5h14M758.5 290h14M758.5 295.5h14" stroke-width="1.5"/>
  <path d="M768 283v3M761 288.5v3M765 294v3" stroke-width="1.8"/>
</svg>
<div class="a" style="left:657px;top:286px;font-size:5px;color:#999">tab</div>
<svg style="left:0;top:0" width="892" height="443"><path d="M797.5 288h4l-2 2.2z" fill="#bdbdbd"/></svg>
<div class="btn" style="left:809px;top:280px;width:40px;height:17px;background:#393939"></div>
<svg style="left:0;top:0" width="892" height="443" fill="none" stroke="#cfcfcf" stroke-width="0.9"><rect x="813.5" y="284.5" width="4.5" height="8"/></svg>
<div class="a" style="left:823px;top:285px;font-size:6.5px;color:#cfcfcf;transform:scaleX(0.93)">Метка</div>
<div class="a" style="left:849px;top:282px;width:10px;height:15px;background:#e8e8e8;border-radius:1px"></div>
<div class="a" style="left:851px;top:284px;width:8px;height:2px;background:#555"></div>
<!-- brush presets -->
<div class="a" style="left:642px;top:298px;width:217px;height:48px;background:#2f2f2f"></div>
<div class="a" style="left:644px;top:300px;width:40px;height:40px;background:linear-gradient(160deg,#dadada,#c9c9c9)"></div>
<div class="a" style="left:686px;top:300px;width:40px;height:40px;background:#d2d2d2"></div>
<div class="a" style="left:729px;top:300px;width:40px;height:40px;background:#cfcfcf"></div>
<div class="a" style="left:770px;top:299px;width:42px;height:42px;background:#5f7f9e"></div>
<div class="a" style="left:773px;top:302px;width:36px;height:36px;background:#8dbbdc"></div>
<div class="a" style="left:814px;top:300px;width:40px;height:40px;background:#d4d4d4"></div>
<svg style="left:0;top:0" width="892" height="443">
  <defs><filter id="bl1" x="-50%" y="-50%" width="200%" height="200%"><feGaussianBlur stdDeviation="1.2"/></filter>
  <filter id="bl3" x="-50%" y="-50%" width="200%" height="200%"><feGaussianBlur stdDeviation="3.5"/></filter>
  <linearGradient id="gstroke" x1="0" y1="0" x2="1" y2="0"><stop offset="0" stop-color="#e0e0e0"/><stop offset="1" stop-color="#222"/></linearGradient></defs>
  <!-- preset1 eraser pen -->
  <g clip-path="url(#cp1)"><path d="M660 320l22-22.5 7 6-22 22.5z" fill="#2c4fb0"/></g><path d="M665 318l14-14.5" stroke="#5b7fd6" stroke-width="1.5"/>
  <path d="M658 322l3-3 5 5-3 3z" fill="#f4f4f4"/>
  <path d="M656 329c4 3 10 3 17-3" stroke="#f8f8f8" stroke-width="2" stroke-dasharray="1.6 1.4" fill="none"/>
  <!-- preset2 -->
  <clipPath id="cp2"><rect x="686" y="300" width="40" height="40"/></clipPath><clipPath id="cp3"><rect x="729" y="300" width="40" height="40"/></clipPath><clipPath id="cp5"><rect x="814" y="300" width="40" height="40"/></clipPath><clipPath id="cp1"><rect x="644" y="300" width="40" height="40"/></clipPath>
  <g clip-path="url(#cp2)"><ellipse cx="716" cy="311" rx="16" ry="8.5" transform="rotate(-50 716 311)" fill="#6a6a6a" filter="url(#bl1)"/></g>
  <path d="M691 312l6-6 2.5 2.5-6 6-3 .8z" fill="none" stroke="#222" stroke-width="1.2"/>
  <path d="M700 326l18 10M702 331l12-8" stroke="#e6e6e6" stroke-width="2" stroke-dasharray="1.5 1.5" opacity="0.8"/>
  <!-- preset3 -->
  <g clip-path="url(#cp3)"><circle cx="735" cy="330" r="12" fill="#1e1e1e" filter="url(#bl3)"/></g>
  <path d="M746 320l20-20 4 4-20 20z" fill="#b8b8b8"/><path d="M748 322l18-18" stroke="#eee" stroke-width="1.5"/>
  <path d="M755 313l4 4" stroke="#111" stroke-width="2.5"/><path d="M745 324l-2 2" stroke="#ddd" stroke-width="3"/>
  <!-- preset4 selected -->
  <path d="M784 322l20-20 5 5-20 20z" fill="#1f3f66"/><path d="M787 321l17-17" stroke="#5f87b0" stroke-width="1.3"/>
  <path d="M786 327l-3 0 1-3 3 1z" fill="#1f3f66"/>
  <path d="M785 334c8-2 16-4 24-5" stroke="#0c2a52" stroke-width="5" fill="none" stroke-linecap="round"/>
  <path d="M777 309l5-4 2.5 2.5-5 4z" fill="none" stroke="#1f4d7a" stroke-width="1.3"/>
  <!-- preset5 -->
  <g clip-path="url(#cp5)"><path d="M828 322l24-24 6 6-24 24z" fill="#1e1e1e"/></g><path d="M832 320l18-18" stroke="#555" stroke-width="1"/>
  <path d="M825 333c6-6 18-6 29-5" stroke="url(#gstroke)" stroke-width="3.5" fill="none" opacity="0.85"/>
</svg>
<div class="a" style="left:644px;top:342px;width:40px;height:4px;background:#d8d8d8"></div>
<div class="a" style="left:686px;top:342px;width:40px;height:4px;background:#d8d8d8"></div>
<div class="a" style="left:729px;top:342px;width:40px;height:4px;background:#d8d8d8"></div>
<div class="a" style="left:770px;top:342px;width:42px;height:4px;background:#d8d8d8"></div>
<div class="a" style="left:814px;top:342px;width:40px;height:4px;background:#d8d8d8"></div>
<div class="a" style="left:762px;top:342px;width:6px;height:4px;border-radius:50%;background:#a0703a;filter:blur(0.5px)"></div>
<div class="a" style="left:805px;top:342px;width:6px;height:4px;border-radius:50%;background:#a0703a;filter:blur(0.5px)"></div>
<!-- snapshot panel -->
<div class="a" style="left:642px;top:346px;width:217px;height:54px;background:#373737"></div>
<div class="a" style="left:645px;top:344.5px;font-size:6.8px;color:#c8c8c8;white-space:nowrap;transform:scaleX(0.86)">Snapshot Docker</div>
<div class="a" style="left:645px;top:353px;font-size:5px;color:#6a6a6a;white-space:nowrap">Снимок</div>
<div class="btn" style="left:684px;top:404px;width:17px;height:16px"></div>
<div class="btn" style="left:747px;top:404px;width:17px;height:16px"></div>
<div class="btn" style="left:809px;top:404px;width:17px;height:16px"></div>
<svg style="left:0;top:0" width="892" height="443" fill="none" stroke="#e8e8e8" stroke-width="1.1">
  <rect x="687.5" y="407.5" width="10" height="9"/><path d="M692.5 409.5v5M690 412h5"/>
  <path d="M750.5 410.5h2l1-1.5h4l1 1.5h2v6.5h-10z"/><circle cx="755.5" cy="413.5" r="2"/>
  <path d="M813.5 409.8h8" stroke-width="1.3"/><path d="M816 408.5h3" stroke-width="1"/><path d="M814.3 411h6.4l-.6 6h-5.2z" fill="#e8e8e8" stroke="none"/>
</svg>
<!-- ===== status bar ===== -->
<div class="a" style="left:34px;top:421px;width:825px;height:22px;background:#474747"></div>
<div class="a" style="left:41px;top:427px;width:14px;height:13px;border:1px solid #7a7a7a;background:#3a3a3a"></div>
<svg style="left:0;top:0" width="892" height="443" fill="none" stroke="#9a9a9a" stroke-width="0.8"><circle cx="48" cy="433.5" r="3.5" stroke-dasharray="1 0.8"/></svg>
<div class="a" style="left:68px;top:430px;font-size:7.5px;color:#c0c0c0;white-space:nowrap">b) Basic-1</div>
<div class="a" style="left:144px;top:430px;font-size:7.5px;color:#c0c0c0;white-space:nowrap;transform:scaleX(0.98)">RGB/альфа-ка...-srgbtrc.icc</div>
<div class="a" style="left:449.5px;top:426px;width:103px;height:14.5px;background:#434343;border:1px solid #363636"></div>
<div class="a" style="left:452px;top:428px;width:2px;height:11px;background:#52687a"></div>
<div class="a" style="left:459px;top:429.5px;font-size:7.5px;color:#c6c6c6;white-space:nowrap">2 480 <u>x</u> 3 508 (49,9 МиБ)</div>
<svg style="left:0;top:0" width="892" height="443" fill="none" stroke="#bdbdbd" stroke-width="1"><path d="M657 430.5a3.5 3.5 0 1 1 0 5.5"/><path d="M656 428l1.5 2.5-2.5 1"/><rect x="657" y="432.5" width="3" height="3"/></svg>
<div class="a" style="left:744px;top:429px;font-size:8px;color:#c0c0c0">67%</div>
<div class="a" style="left:775px;top:433px;width:71px;height:1px;background:#2b2b2b"></div>
<div class="a" style="left:775px;top:433px;width:24px;height:1px;background:#5a7a98"></div>
<div class="a" style="left:795px;top:429px;width:8px;height:8px;border-radius:50%;background:#4a4a4a;border:1px solid #2a2a2a"></div>
<svg style="left:0;top:0" width="892" height="443" fill="#8a8a8a"><rect x="639" y="237" width="1.2" height="1.2"/><rect x="639" y="239" width="1.2" height="1.2"/><rect x="639" y="241" width="1.2" height="1.2"/><rect x="639" y="243" width="1.2" height="1.2"/><rect x="639" y="245" width="1.2" height="1.2"/><rect x="639" y="247" width="1.2" height="1.2"/><rect x="639" y="249" width="1.2" height="1.2"/><rect x="639" y="251" width="1.2" height="1.2"/></svg>
<div class="a" style="left:850px;top:424px;width:9px;height:19px;background:#fafafa;border:1px solid #9a9a9a;overflow:hidden"><div class="a" style="left:1px;top:3px;width:6px;height:8px;background:linear-gradient(160deg,#6fa7b8,#a9c9a0 60%,#e0e0e0)"></div></div>

<!--REST-->
</body></html>
